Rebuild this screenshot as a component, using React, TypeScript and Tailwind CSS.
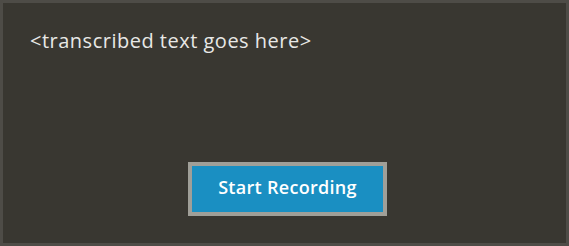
export default function App() {
  return (
    <div className="w-[569px] h-[246px] border-[3px] border-[#4e4c47] bg-[#393731] flex flex-col" style={{ fontFamily: '"Open Sans", "Noto Sans", sans-serif' }}>
      <div className="pl-[27px] pt-[24px] text-[20px] leading-[28px] tracking-[0.5px] text-[#e8e8e6]">&lt;transcribed text goes here&gt;</div>
      <div className="flex-1" />
      <div className="flex justify-center pl-[6px] pb-[27px]">
        <button className="w-[199px] h-[54px] border-4 border-[#a09f98] bg-[#1a8fc2] pb-[3px] text-white text-[18px] tracking-[0.3px] font-semibold">
          Start Recording
        </button>
      </div>
    </div>
  );
}
